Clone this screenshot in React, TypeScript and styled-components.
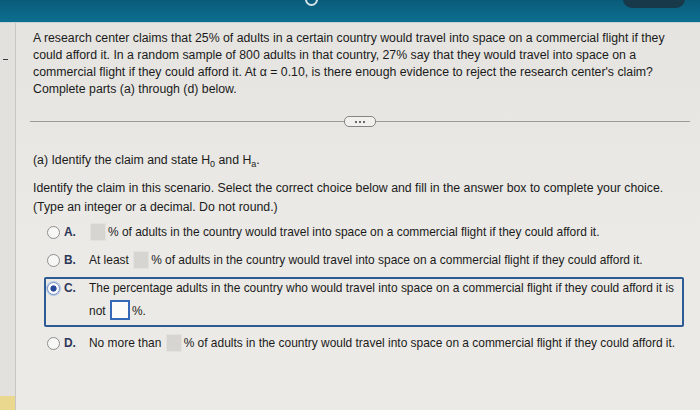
import React from "react";
import styled, { createGlobalStyle } from "styled-components";

const GlobalStyle = createGlobalStyle`
  body {
    margin: 0;
    background: #e8e7e3;
    font-family: "Liberation Sans", Arial, sans-serif;
  }
`;

type Choice = {
  letter: string;
  before?: string;
  after: string;
  selected?: boolean;
};

const choices: Choice[] = [
  { letter: "A.", after: "% of adults in the country would travel into space on a commercial flight if they could afford it." },
  { letter: "B.", before: "At least", after: "% of adults in the country would travel into space on a commercial flight if they could afford it." },
  {
    letter: "C.",
    before: "The percentage adults in the country who would travel into space on a commercial flight if they could afford it is",
    after: "%.",
    selected: true,
  },
  { letter: "D.", before: "No more than", after: "% of adults in the country would travel into space on a commercial flight if they could afford it." },
];

const App = () => {
  return (
    <>
      <GlobalStyle />
      <Page>
        <TopBar>
          <HeaderDot />
          <HeaderButton />
        </TopBar>
        <Body>
          <LeftRail>
            <RailDash />
            <RailNote />
          </LeftRail>
          <Content>
            <Question>
              A research center claims that 25% of adults in a certain country would travel into space on a commercial flight if they
              <br />
              could afford it. In a random sample of 800 adults in that country, 27% say that they would travel into space on a
              <br />
              commercial flight if they could afford it. At α = 0.10, is there enough evidence to reject the research center's claim?
              <br />
              Complete parts (a) through (d) below.
            </Question>
            <Divider>
              <MorePill>
                <span />
                <span />
                <span />
              </MorePill>
            </Divider>
            <PartTitle>
              (a) Identify the claim and state H<sub>0</sub> and H<sub>a</sub>.
            </PartTitle>
            <Instructions>
              Identify the claim in this scenario. Select the correct choice below and fill in the answer box to complete your choice.
              <br />
              (Type an integer or a decimal. Do not round.)
            </Instructions>
            <Options>
              {choices.map((c) => (
                <Option key={c.letter} $selected={c.selected}>
                  <Radio $selected={c.selected} />
                  <Letter>{c.letter}</Letter>
                  {c.selected ? (
                    <OptionText>
                      {c.before}
                      <SecondLine>
                        not <AnswerBox $active />
                        {c.after}
                      </SecondLine>
                    </OptionText>
                  ) : (
                    <OptionText>
                      {c.before && <>{c.before} </>}
                      <AnswerBox />
                      {c.after}
                    </OptionText>
                  )}
                </Option>
              ))}
            </Options>
          </Content>
        </Body>
      </Page>
    </>
  );
};

const Page = styled.div`
  width: 700px;
  height: 410px;
  overflow: hidden;
  display: flex;
  flex-direction: column;
  background: linear-gradient(180deg, #e4e3df 0%, #ebeae6 60%, #eceae6 100%);
`;

const TopBar = styled.div`
  height: 22px;
  flex-shrink: 0;
  position: relative;
  background: linear-gradient(180deg, #0a5b7a 0%, #0d6f90 100%);
  border-bottom: 1px solid #c4d3d8;
`;

const HeaderDot = styled.div`
  position: absolute;
  left: 305px;
  top: -7px;
  width: 9px;
  height: 9px;
  border-radius: 50%;
  border: 2px solid #d3e2e8;
`;

const HeaderButton = styled.div`
  position: absolute;
  right: 15px;
  top: -10px;
  width: 62px;
  height: 18px;
  border-radius: 9px;
  background: #17394a;
`;

const Body = styled.div`
  flex: 1;
  display: flex;
`;

const LeftRail = styled.div`
  width: 15px;
  flex-shrink: 0;
  display: flex;
  flex-direction: column;
  background: #e2e1dd;
  border-right: 1px solid #c8c7c3;
`;

const RailDash = styled.div`
  width: 5px;
  height: 1px;
  margin: 36px 0 0 3px;
  background: #3a3a3a;
`;

const RailNote = styled.div`
  margin-top: auto;
  height: 14px;
  background: #ead88f;
`;

const Content = styled.div`
  flex: 1;
  padding: 7px 16px 0 17px;
  color: #1b1b1b;
  font-size: 12.3px;
`;

const Question = styled.p`
  margin: 0;
  line-height: 17px;
  white-space: nowrap;
`;

const Divider = styled.div`
  height: 1px;
  margin: 23px -6px 0 -3px;
  background: #9c9b98;
  display: flex;
  justify-content: center;
  align-items: center;
`;

const MorePill = styled.div`
  display: flex;
  gap: 2px;
  align-items: center;
  justify-content: center;
  width: 30px;
  height: 9px;
  border-radius: 5px;
  border: 1px solid #858583;
  background: #f1f0ed;

  span {
    width: 2px;
    height: 2px;
    border-radius: 1px;
    background: #3f3f3f;
  }
`;

const PartTitle = styled.div`
  margin-top: 30px;
  line-height: 17px;

  sub {
    font-size: 9px;
    vertical-align: -3px;
    line-height: 0;
  }
`;

const Instructions = styled.p`
  margin: 10px 0 0;
  line-height: 19px;
  white-space: nowrap;
`;

const Options = styled.div`
  margin: 4px 0 0 11px;
  display: flex;
  flex-direction: column;
  gap: 5px;
  font-size: 11.95px;
`;

const Option = styled.div<{ $selected?: boolean }>`
  display: flex;
  align-items: flex-start;
  padding: ${(p) => (p.$selected ? "0 4px 1px 1px" : "0 4px 0 1px")};
  border: 2px solid ${(p) => (p.$selected ? "#2f5b94" : "transparent")};
  border-radius: 2px;
  line-height: 19px;
`;

const Radio = styled.span<{ $selected?: boolean }>`
  width: 11px;
  height: 11px;
  margin-top: 3px;
  border-radius: 50%;
  flex-shrink: 0;
  border: 1px solid ${(p) => (p.$selected ? "#6f8fc4" : "#8e8e8c")};
  background: ${(p) =>
    p.$selected ? "radial-gradient(circle, #28489a 0 2.8px, #fbfbfb 3.4px)" : "#f7f7f5"};
  box-shadow: ${(p) => (p.$selected ? "0 0 0 1px #b4c7e6" : "none")};
`;

const Letter = styled.span`
  width: 25px;
  margin-left: 4px;
  flex-shrink: 0;
  font-weight: bold;
  color: #2c3658;
`;

const OptionText = styled.span`
  white-space: nowrap;
`;

const SecondLine = styled.span`
  display: block;
  line-height: 26px;
`;

const AnswerBox = styled.span<{ $active?: boolean }>`
  display: inline-block;
  vertical-align: -5px;
  width: ${(p) => (p.$active ? "16px" : "14px")};
  height: 16px;
  margin: 0 2px 0 1px;
  background: ${(p) => (p.$active ? "#fbfbfa" : "#d6d5d2")};
  border: ${(p) => (p.$active ? "2px solid #3568b6" : "1px solid #e3e2df")};
`;

export default App;
